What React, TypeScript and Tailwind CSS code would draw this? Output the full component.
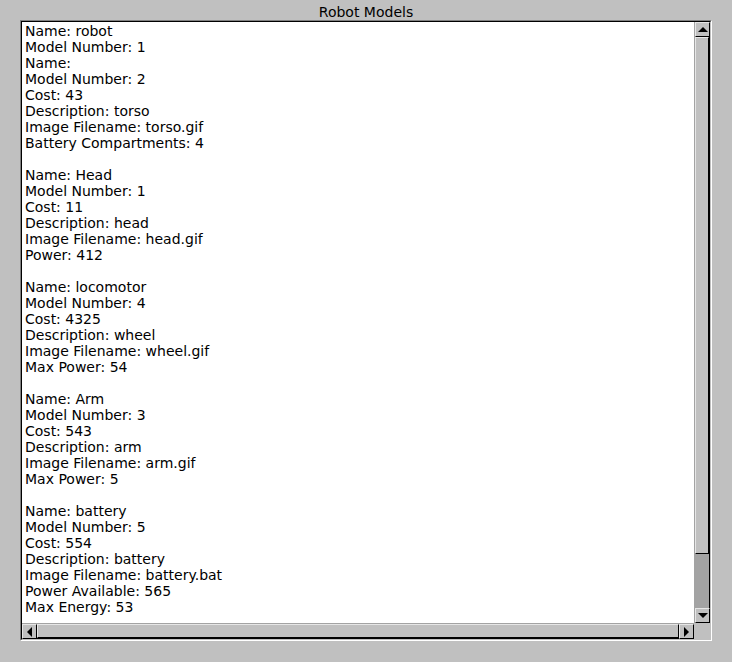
import React from 'react';

const lines = [
  'Name: robot',
  'Model Number: 1',
  'Name: ',
  'Model Number: 2',
  'Cost: 43',
  'Description: torso',
  'Image Filename: torso.gif',
  'Battery Compartments: 4',
  '',
  'Name: Head',
  'Model Number: 1',
  'Cost: 11',
  'Description: head',
  'Image Filename: head.gif',
  'Power: 412',
  '',
  'Name: locomotor',
  'Model Number: 4',
  'Cost: 4325',
  'Description: wheel',
  'Image Filename: wheel.gif',
  'Max Power: 54',
  '',
  'Name: Arm',
  'Model Number: 3',
  'Cost: 543',
  'Description: arm',
  'Image Filename: arm.gif',
  'Max Power: 5',
  '',
  'Name: battery',
  'Model Number: 5',
  'Cost: 554',
  'Description: battery',
  'Image Filename: battery.bat',
  'Power Available: 565',
  'Max Energy: 53',
];

type Dir = 'up' | 'down' | 'left' | 'right';

const arrowPoints: Record<Dir, string> = {
  up: '5,0 10,5 0,5',
  down: '0,0 10,0 5,5',
  left: '5,0 5,10 0,5',
  right: '0,0 5,5 0,10',
};

const ArrowButton = ({ dir }: { dir: Dir }) => {
  const vertical = dir === 'up' || dir === 'down';
  return (
    <div className="w-[15px] h-[15px] bg-[#c0c0c0] border-t border-l border-[#e6e6e6] border-r border-b border-r-black border-b-black flex items-center justify-center shrink-0">
      <svg width={vertical ? 10 : 5} height={vertical ? 5 : 10} viewBox={vertical ? '0 0 10 5' : '0 0 5 10'}>
        <polygon points={arrowPoints[dir]} fill="#000" />
      </svg>
    </div>
  );
};

export default function App() {
  return (
    <div
      className="w-[732px] h-[662px] bg-[#c0c0c0] text-black"
      style={{ fontFamily: '"DejaVu Sans", Verdana, sans-serif' }}
    >
      {/* Title */}
      <div className="h-[20px] flex items-center justify-center text-[14px] leading-none pt-[4px]">
        Robot Models
      </div>

      {/* Frame */}
      <div className="ml-[20px] w-[692px] h-[621px] border-t border-l border-[#808080] border-r border-b border-r-white border-b-white">
        <div className="w-full h-full border-t border-l border-black border-r border-b border-r-[#c0c0c0] border-b-[#c0c0c0] grid grid-cols-[1fr_16px] grid-rows-[1fr_16px]">
          {/* Text area */}
          <div className="bg-white overflow-hidden pl-[3px] pt-[1px] text-[14px] leading-[16px] whitespace-pre">
            {lines.map((l, i) => (
              <div key={i} className="h-[16px]">{l}</div>
            ))}
          </div>

          {/* Vertical scrollbar */}
          <div className="flex flex-col bg-[#a3a3a3] border-r border-black pl-[1px]">
            <ArrowButton dir="up" />
            <div className="h-[517px] bg-[#c0c0c0] border-t border-l border-[#e6e6e6] border-r border-b border-r-black border-b-black" />
            <div className="flex-1" />
            <ArrowButton dir="down" />
          </div>

          {/* Horizontal scrollbar */}
          <div className="flex bg-[#a3a3a3] border-b border-black pt-[1px]">
            <ArrowButton dir="left" />
            <div className="flex-1 bg-[#c0c0c0] border-t border-l border-[#e6e6e6] border-r border-b border-r-black border-b-black" />
            <ArrowButton dir="right" />
          </div>

          {/* Corner */}
          <div className="bg-[#c0c0c0]" />
        </div>
      </div>
    </div>
  );
}
